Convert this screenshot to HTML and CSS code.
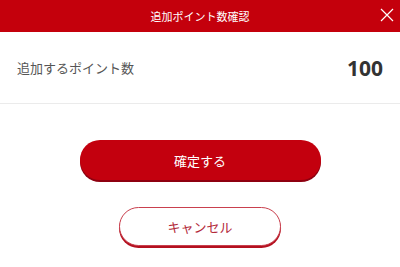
FILE: index.html
```html
<!DOCTYPE html>
<html lang="ja">
<head>
<meta charset="utf-8">
<link rel="stylesheet" href="styles.css">
</head>
<body>
<div class="dialog">
  <header class="head">
    <h1 class="title">追加ポイント数確認</h1>
    <button class="close" aria-label="閉じる">
      <svg width="14" height="14" viewBox="0 0 14 14"><path d="M1 1L13 13M13 1L1 13" stroke="#fff" stroke-width="1.2" fill="none"/></svg>
    </button>
  </header>
  <div class="row">
    <span class="label">追加するポイント数</span>
    <span class="value">100</span>
  </div>
  <div class="actions">
    <button class="btn primary">確定する</button>
    <button class="btn secondary">キャンセル</button>
  </div>
</div>
</body>
</html>
```
FILE: styles.css
```css
html, body { margin: 0; padding: 0; background: #fff; }
body { font-family: "Noto Sans CJK JP", "Noto Sans", sans-serif; width: 400px; height: 267px; overflow: hidden; }
.dialog { display: flex; flex-direction: column; }
.head { height: 32px; background: #c4000c; position: relative; display: flex; align-items: center; justify-content: center; }
.title { margin: 0; font-size: 11px; font-weight: 400; color: #fff; line-height: 1; }
.close { position: absolute; right: 5px; top: 7px; width: 16px; height: 16px; padding: 0; border: 0; background: none; display: flex; align-items: center; justify-content: center; }
.row { height: 71px; display: flex; align-items: center; justify-content: space-between; padding: 0 17px 0 17px; border-bottom: 1px solid #ebebeb; }
.label { font-size: 13px; color: #555; }
.value { font-family: "Noto Sans", sans-serif; font-weight: 700; font-size: 21px; color: #333; }
.actions { display: flex; flex-direction: column; align-items: center; padding-top: 36px; gap: 27px; }
.btn { font-family: "Noto Sans CJK JP", sans-serif; font-size: 13px; border-radius: 21px; padding: 0; cursor: pointer; }
.primary { width: 241px; height: 40px; background: #c3000e; color: #fff; border: 0; box-shadow: 0 2px 0 #8e0010; }
.secondary { width: 162px; height: 39px; background: #fff; color: #b32a3a; border: 1px solid #c9404e; box-shadow: 0 2px 0 #b4101f; }
```
